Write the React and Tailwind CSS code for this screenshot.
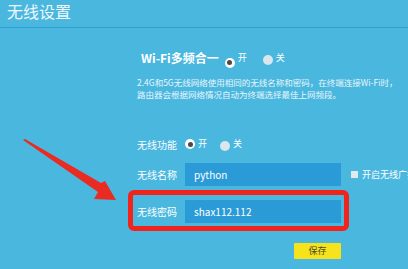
import React from "react";

const font = { fontFamily: '"Noto Sans CJK SC", "Noto Sans", sans-serif' };

function Radio({ on }) {
  return (
    <span className={"inline-flex shrink-0 items-center justify-center w-[10px] h-[10px] rounded-full " + (on ? "bg-white" : "bg-[#d9e6ec]")}>
      {on && <span className="w-[5px] h-[5px] rounded-full bg-[#4a4a4a]" />}
    </span>
  );
}

export default function App() {
  return (
    <div className="relative w-[408px] h-[269px] overflow-hidden bg-[#4ab7df] text-white" style={font}>
      <div className="pl-[7px] h-[28px] border-b border-[#2f9fd2]">
        <div className="text-[16px] leading-[20px] pt-[1px] text-[#eef8fc]">无线设置</div>
      </div>
      <div className="pl-[137px]">
        <div className="flex items-center h-[20px] mt-[20px] pl-[4px]">
          <span className="text-[12px] font-bold">Wi-Fi多频合一</span>
          <span className="ml-[6px]"><Radio on /></span>
          <span className="ml-[3px] text-[9px]">开</span>
          <span className="ml-[16px]"><Radio /></span>
          <span className="ml-[3px] text-[9px]">关</span>
        </div>
        <div className="mt-[8px] text-[8.5px] leading-[12px] text-[#e8f6fb] whitespace-nowrap">
          <div>2.4G和5G无线网络使用相同的无线名称和密码，在终端连接Wi-Fi时，</div>
          <div>路由器会根据网络情况自动为终端选择最佳上网频段。</div>
        </div>
        <div className="flex items-center h-[16px] mt-[36px]">
          <span className="text-[10px] w-[48px] shrink-0">无线功能</span>
          <Radio on />
          <span className="ml-[3px] text-[9px]">开</span>
          <span className="ml-[13px]"><Radio /></span>
          <span className="ml-[3px] text-[9px]">关</span>
        </div>
        <div className="flex items-center h-[23px] mt-[11px]">
          <span className="text-[10px] w-[48px] shrink-0">无线名称</span>
          <div className="w-[156px] shrink-0 h-[23px] bg-[#2a9bd7] flex items-center pl-[9px] text-[10px]">python</div>
          <span className="ml-[10px] shrink-0 w-[7px] h-[7px] bg-[#dfeaf0]" />
          <span className="ml-[4px] shrink-0 text-[9px] whitespace-nowrap">开启无线广播</span>
        </div>
        <div className="flex items-center h-[23px] mt-[14px]">
          <span className="text-[10px] w-[48px] shrink-0">无线密码</span>
          <div className="w-[156px] shrink-0 h-[23px] bg-[#2a9bd7] flex items-center pl-[9px] text-[10px]">shax112.112</div>
        </div>
        <div className="flex mt-[20px] pl-[157px]">
          <div className="w-[47px] h-[16px] bg-[#f6e31c] text-[#4a4a2a] text-[9px] flex items-center justify-center rounded-[1px]">保存</div>
        </div>
      </div>
      <div className="absolute left-[128px] top-[190px] w-[221px] h-[41px] border-[5px] border-[#f2231b] rounded-[6px]" />
      <svg className="absolute left-0 top-0" width="408" height="269" viewBox="0 0 408 269">
        <polygon points="23,140 25,139 101,183 105,181 116,200 94,199 98,192" fill="#ea2b22" />
      </svg>
    </div>
  );
}
